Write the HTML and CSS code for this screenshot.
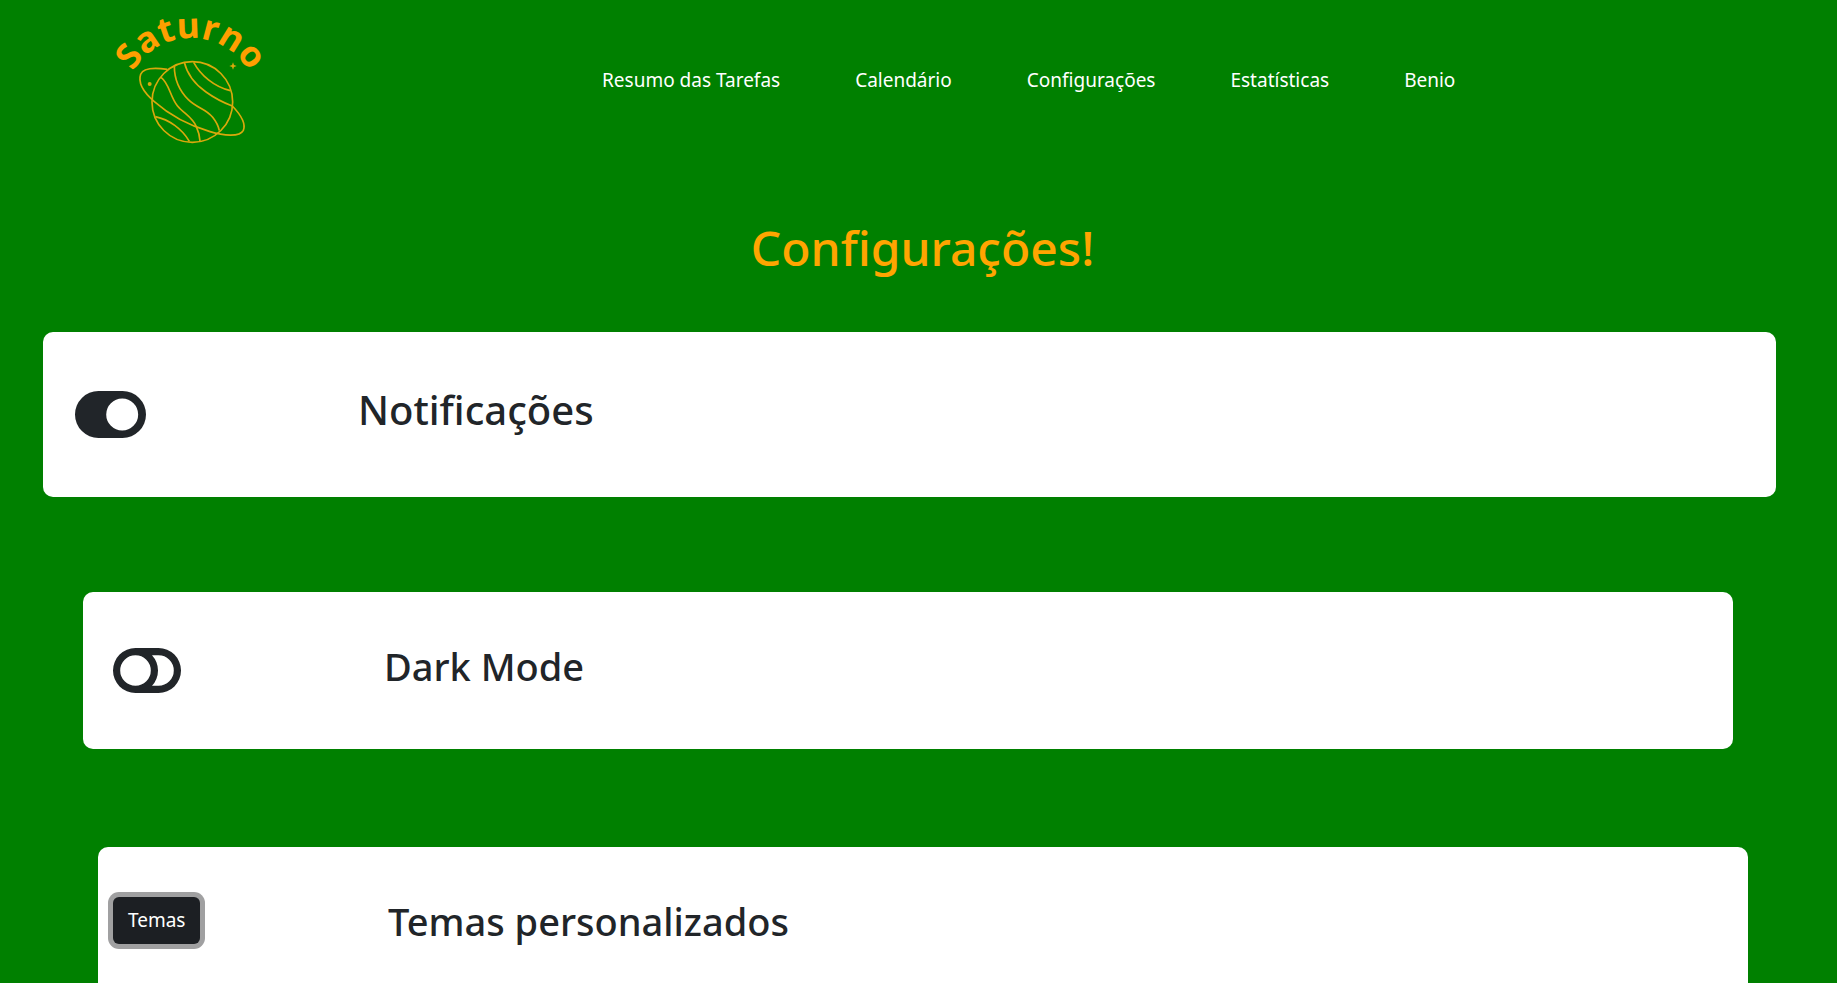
FILE: index.html
```html
<!DOCTYPE html>
<html lang="pt-BR">
<head>
<meta charset="utf-8">
<title>Saturno - Configurações</title>
<link rel="stylesheet" href="styles.css">
</head>
<body>
<header class="topbar">
  <a class="brand" href="#">
    <svg class="brand-logo" viewBox="0 0 540 480" role="img" aria-label="Saturno">
      <defs><path id="arc" d="M73 314A200 200 0 0 1 473 314"/></defs>
      <text class="brand-name" text-anchor="middle"><textPath href="#arc" startOffset="50%">Saturno</textPath></text>
      <g class="brand-planet">
        <circle cx="277" cy="306" r="121"/>
        <path d="M202 208C160 202 129 204 122 223C112 252 134 280 163 305C207 344 269 377 330 395C372 408 420 411 430 391C439 369 420 342 397 318"/>
        <path d="M183 232C208 250 210 290 232 317C252 341 278 352 289 380C297 398 299 408 300 423"/>
        <path d="M223 198C223 240 236 270 265 299C291 325 317 325 338 352C350 367 355 377 358 392"/>
        <path d="M253 187C261 220 284 252 318 276C346 296 370 308 397 318"/>
        <path d="M281 187C302 226 342 260 391 272"/>
        <path d="M166 350C207 359 246 386 268 424"/>
      </g>
      <path class="brand-star" d="M399 187L402 195L410 198L402 201L399 209L396 201L388 198L396 195Z"/>
      <circle class="brand-star" cx="149" cy="252" r="6"/>
    </svg>
  </a>
  <nav class="menu">
    <a href="#">Resumo das Tarefas</a>
    <a href="#">Calendário</a>
    <a href="#">Configurações</a>
    <a href="#">Estatísticas</a>
    <a href="#">Benio</a>
  </nav>
</header>
<main>
  <h1 class="title">Configurações!</h1>
  <section class="card card-active">
    <span class="switch">
      <input type="checkbox" role="switch" id="notif" checked>
      <svg viewBox="0 0 68 45" aria-hidden="true"><path fill-rule="evenodd" d="M22.5 0H45.5a22.5 22.5 0 0 1 0 45H22.5a22.5 22.5 0 0 1 0-45zM45.2 7.2a15.3 15.3 0 1 0 0 30.6a15.3 15.3 0 0 0 0-30.6z"/></svg>
    </span>
    <h2><label for="notif">Notificações</label></h2>
  </section>
  <section class="card">
    <span class="switch">
      <input type="checkbox" role="switch" id="dark">
      <svg viewBox="0 0 68 45" aria-hidden="true"><path fill-rule="evenodd" d="M22.5 0H45.5a22.5 22.5 0 0 1 0 45H22.5a22.5 22.5 0 0 1 0-45zM22.5 7.2a15.3 15.3 0 1 0 0 30.6a15.3 15.3 0 0 0 0-30.6zM39 7.2H45.5a15.3 15.3 0 0 1 0 30.6H39a22.5 22.5 0 0 0 0-30.6z"/></svg>
    </span>
    <h2><label for="dark">Dark Mode</label></h2>
  </section>
  <section class="card card-themes">
    <div><button class="theme-button" type="button">Temas</button></div>
    <h2>Temas personalizados</h2>
  </section>
</main>
</body>
</html>
```
FILE: styles.css
```css
* { box-sizing: border-box; }
body {
  margin: 0;
  background: #008000;
  color: #212529;
  font-family: "Segoe UI", "Noto Sans", "Open Sans", sans-serif;
  overflow-x: hidden;
}
.topbar {
  display: flex;
  align-items: center;
  padding-left: 100px;
}
.brand-logo { display: block; width: 180px; height: 160px; }
.brand-name { font: 700 106px "Open Sans", sans-serif; fill: #ff9f00; }
.brand-planet { fill: none; stroke: #d9a90c; stroke-width: 5; }
.brand-star { fill: #d9a90c; }
.menu {
  display: flex;
  gap: 75px;
  margin-left: 322px;
  font-size: 19px;
  line-height: 28px;
}
.menu a { color: #fff; text-decoration: none; white-space: nowrap; }
.title {
  margin: 52px 0 48px;
  padding-left: 8px;
  color: orange;
  font-size: 48px;
  font-weight: 500;
  line-height: 72px;
  text-align: center;
}
.card {
  display: grid;
  grid-template-columns: 271px 1fr;
  align-items: center;
  min-height: 157px;
  margin: 0 104px 98px 83px;
  padding: 0 30px;
  border-radius: 10px;
  background: #fff;
}
.card h2 { margin: 0; font-size: 38px; font-weight: 500; line-height: 48px; padding-bottom: 10px; }
.card-active {
  grid-template-columns: 283px 1fr;
  min-height: 165px;
  margin: 0 61px 95px 43px;
  padding: 0 32px;
}
.card-active h2 { font-size: 40px; }
.card-themes { grid-template-columns: 275px 1fr; margin: 0 89px 0 98px; padding: 0 15px; }
.switch { position: relative; width: 68px; }
.card-active .switch { width: 71px; }
.switch svg { display: block; width: 100%; fill: #212529; }
.switch input {
  position: absolute;
  inset: 0;
  width: 100%;
  height: 100%;
  margin: 0;
  opacity: 0;
}
.theme-button {
  display: block;
  margin-bottom: 10px;
  padding: 8px 15px;
  border: 0;
  border-radius: 6px;
  background: #1c1f23;
  color: #fff;
  box-shadow: 0 0 0 5px #a0a0a1;
  font: 400 19px/31px "Segoe UI", "Noto Sans", sans-serif;
}
body { scrollbar-width: none; }
html { scrollbar-width: none; }
```
